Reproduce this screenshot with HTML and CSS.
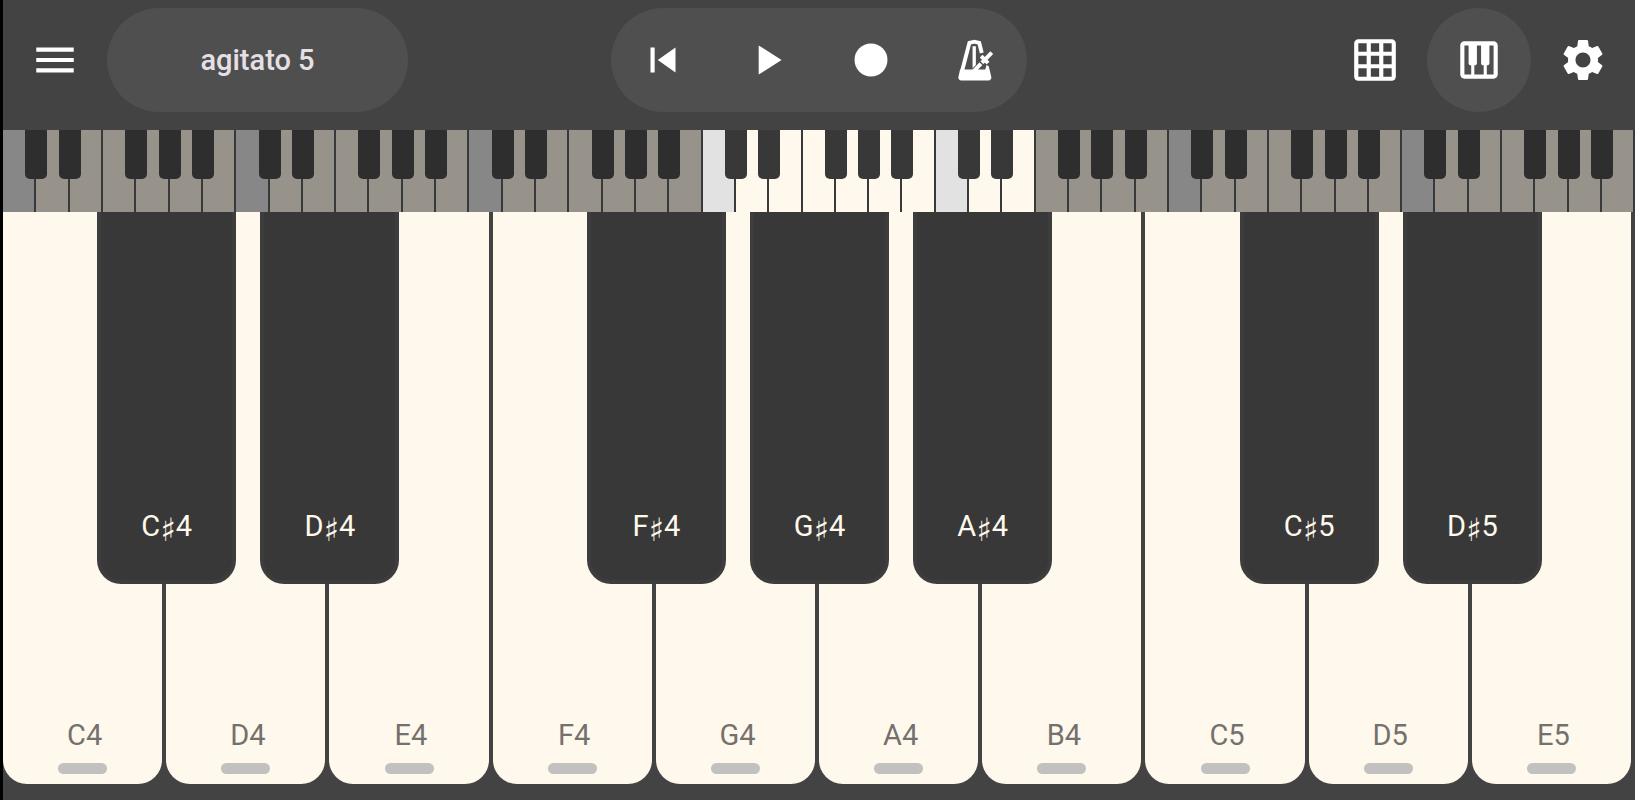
FILE: index.html
```html
<!DOCTYPE html>
<html lang="en">
<head>
    <meta charset="UTF-8">
    <meta name="viewport" content="width=device-width, initial-scale=1.0">
    <title>agitato 5</title>
    <link rel="stylesheet" href="styles.css">
</head>
<body>
    <header class="toolbar">
        <div class="side">
            <button class="icon-btn" aria-label="Menu">
                <svg viewBox="0 0 24 24"><path d="M3 18h18v-2H3v2zm0-5h18v-2H3v2zm0-7v2h18V6H3z"/></svg>
            </button>
            <button class="preset">agitato 5</button>
        </div>

        <div class="transport">
            <button class="icon-btn" aria-label="Back to start">
                <svg viewBox="0 0 24 24"><path d="M6 6h2v12H6zm3.5 6l8.5 6V6z"/></svg>
            </button>
            <button class="icon-btn" aria-label="Play">
                <svg viewBox="0 0 24 24"><path d="M8 5v14l11-7z"/></svg>
            </button>
            <button class="icon-btn" aria-label="Record">
                <svg viewBox="0 0 24 24"><circle cx="12" cy="12" r="7.9"/></svg>
            </button>
            <button class="icon-btn" aria-label="Metronome">
                <svg viewBox="0 0 51 51">
                    <path d="M10.3 35.3H36l1.2-4.6 2.3 1.3 2.6 10.6c.5 2-.8 3.8-3 3.8H11.6c-2.2 0-3.5-1.8-3-3.8z"/>
                    <path class="line" d="M12 38l7.8-30 5-1.2 5 1.2 2.6 10.4"/>
                    <path d="M23 11.5h3.4v19L23 34z"/>
                    <path class="line" d="M24 37L42.6 18"/>
                    <path class="line" d="M31.8 21.6l7 7"/>
                    <path class="cut" d="M29.6 26.4l6 5.8"/>
                </svg>
            </button>
        </div>

        <div class="side right">
            <button class="icon-btn" aria-label="Pads">
                <svg viewBox="0 0 24 24"><path d="M20 2H4c-1.1 0-2 .9-2 2v16c0 1.1.9 2 2 2h16c1.1 0 2-.9 2-2V4c0-1.1-.9-2-2-2zM8 20H4v-4h4v4zm0-6H4v-4h4v4zm0-6H4V4h4v4zm6 12h-4v-4h4v4zm0-6h-4v-4h4v4zm0-6h-4V4h4v4zm6 12h-4v-4h4v4zm0-6h-4v-4h4v4zm0-6h-4V4h4v4z"/></svg>
            </button>
            <button class="icon-btn active" aria-label="Keyboard">
                <svg viewBox="0 0 24 24"><path d="M19 3H5c-1.1 0-2 .9-2 2v14c0 1.1.9 2 2 2h14c1.1 0 2-.9 2-2V5c0-1.1-.9-2-2-2zm-5 11.5h.25V19h-4.5v-4.5H10c.55 0 1-.45 1-1V5h2v8.5c0 .55.45 1 1 1zM5 5h2v8.5c0 .55.45 1 1 1h.25V19H5V5zm14 14h-3.25v-4.5H16c.55 0 1-.45 1-1V5h2v14z"/></svg>
            </button>
            <button class="icon-btn" aria-label="Settings">
                <svg viewBox="0 0 24 24"><path d="M19.14 12.94c.04-.3.06-.61.06-.94 0-.32-.02-.64-.07-.94l2.03-1.58c.18-.14.23-.41.12-.61l-1.92-3.32c-.12-.22-.37-.29-.59-.22l-2.39.96c-.5-.38-1.03-.7-1.62-.94l-.36-2.54c-.04-.24-.24-.41-.48-.41h-3.84c-.24 0-.43.17-.47.41l-.36 2.54c-.59.24-1.13.57-1.62.94l-2.39-.96c-.22-.08-.47 0-.59.22L2.74 8.87c-.12.21-.08.47.12.61l2.03 1.58c-.05.3-.09.63-.09.94s.02.64.07.94l-2.03 1.58c-.18.14-.23.41-.12.61l1.92 3.32c.12.22.37.29.59.22l2.39-.96c.5.38 1.03.7 1.62.94l.36 2.54c.05.24.24.41.48.41h3.84c.24 0 .44-.17.47-.41l.36-2.54c.59-.24 1.13-.56 1.62-.94l2.39.96c.22.08.47 0 .59-.22l1.92-3.32c.12-.22.07-.47-.12-.61l-2.01-1.58zM12 15.6c-1.98 0-3.6-1.62-3.6-3.6s1.62-3.6 3.6-3.6 3.6 1.62 3.6 3.6-1.62 3.6-3.6 3.6z"/></svg>
            </button>
        </div>
    </header>

    <div class="overview" id="overview"></div>

    <main class="keyboard" id="keyboard"></main>

    <script>
        const notes = ['C', 'D', 'E', 'F', 'G', 'A', 'B'];
        const hasSharp = ['C', 'D', 'F', 'G', 'A'];
        const octaves = 7;
        const firstKey = 21;
        const visibleKeys = 10;

        const overview = document.getElementById('overview');
        const keyboard = document.getElementById('keyboard');

        // Small keyboard, with the playable range lit
        for (let i = 0; i < octaves * 7; i++) {
            const note = notes[i % 7];
            const key = document.createElement('div');
            key.className = 'mini';
            if (note === 'C') key.classList.add('root');
            if (i >= firstKey && i < firstKey + visibleKeys) key.classList.add('lit');
            if (hasSharp.includes(note)) {
                key.innerHTML = '<span class="mini-black"></span>';
            }
            overview.appendChild(key);
        }

        // Playable keys
        for (let i = firstKey; i < firstKey + visibleKeys; i++) {
            const note = notes[i % 7];
            const octave = Math.floor(i / 7) + 1;
            const slot = document.createElement('div');
            slot.className = 'slot';
            slot.innerHTML = `<button class="white"><span class="name">${note}${octave}</span><span class="grip"></span></button>`;
            if (hasSharp.includes(note)) {
                slot.innerHTML += `<button class="black"><span>${note}<span class="sharp">♯</span>${octave}</span></button>`;
            }
            keyboard.appendChild(slot);
        }
    </script>
</body>
</html>
```
FILE: styles.css
```css
:root {
    --bar: #434343;
    --pill: #4f4f4f;
    --ivory: #fff8ed;
    --ebony: #383838;
}
* {box-sizing: border-box; margin: 0; padding: 0;}
body {
    background: var(--bar);
    border-left: 3px solid #000;
    font-family: Roboto, sans-serif;
    font-size: 29px;
    line-height: 32px;
    height: 100vh;
    display: flex;
    flex-direction: column;
    overflow: hidden;
}
button {
    border: 0;
    background: none;
    font: inherit;
    cursor: pointer;
}

.toolbar {
    display: grid;
    grid-template-columns: 1fr auto 1fr;
    padding: 8px 0 18px;
}
.side {display: flex;}
.right {justify-content: flex-end;}

.icon-btn {
    width: 104px;
    height: 104px;
    border-radius: 50%;
    display: flex;
    align-items: center;
    justify-content: center;
}
.icon-btn svg {
    width: 50px;
    height: 50px;
    fill: #fff;
}
.icon-btn .line {fill: none; stroke: #fff; stroke-width: 4;}
.icon-btn .cut {fill: none; stroke: var(--pill); stroke-width: 1.4;}
.active {background: var(--pill);}

.preset {
    width: 301px;
    border-radius: 52px;
    background: var(--pill);
    color: #e6e0e6;
    font-weight: 500;
}
.transport {
    display: flex;
    border-radius: 52px;
    background: var(--pill);
}

.overview {
    display: flex;
    height: 82px;
    overflow: hidden;
}
.mini {
    flex: 1;
    position: relative;
    background: #97938b;
    border-right: 2px solid #38393a;
}
.mini.root {background: #878787;}
.mini.lit {background: var(--ivory);}
.mini.root.lit {background: #e2e2e2;}
.mini-black {
    position: absolute;
    top: 0;
    right: -13px;
    z-index: 1;
    width: 22px;
    height: 49px;
    border-radius: 0 0 5px 5px;
    background: #2e2e2e;
}
.lit .mini-black {background: var(--ebony);}

.keyboard {
    flex: 1;
    display: flex;
    padding-bottom: 16px;
}
.slot {
    flex: 1;
    position: relative;
    display: flex;
    padding-right: 4px;
}
.white {
    flex: 1;
    display: flex;
    flex-direction: column;
    align-items: center;
    justify-content: flex-end;
    gap: 12px;
    padding-bottom: 10px;
    border-radius: 0 0 24px 24px;
    background: var(--ivory);
    color: #74716c;
}
.name {padding-left: 4px;}
.grip {
    width: 49px;
    height: 11px;
    border-radius: 6px;
    background: #c1c1bf;
}
.black {
    position: absolute;
    top: 0;
    right: -70px;
    z-index: 1;
    width: 139px;
    height: 65%;
    display: flex;
    align-items: flex-end;
    justify-content: center;
    padding-bottom: 34px;
    border: 4px solid #3d3d3d;
    border-top: 0;
    border-radius: 0 0 24px 24px;
    background: var(--ebony);
    color: var(--ivory);
}
.sharp {
    font-family: "DejaVu Sans", sans-serif;
    font-size: 32px;
    line-height: 1;
    vertical-align: -5px;
}
```
